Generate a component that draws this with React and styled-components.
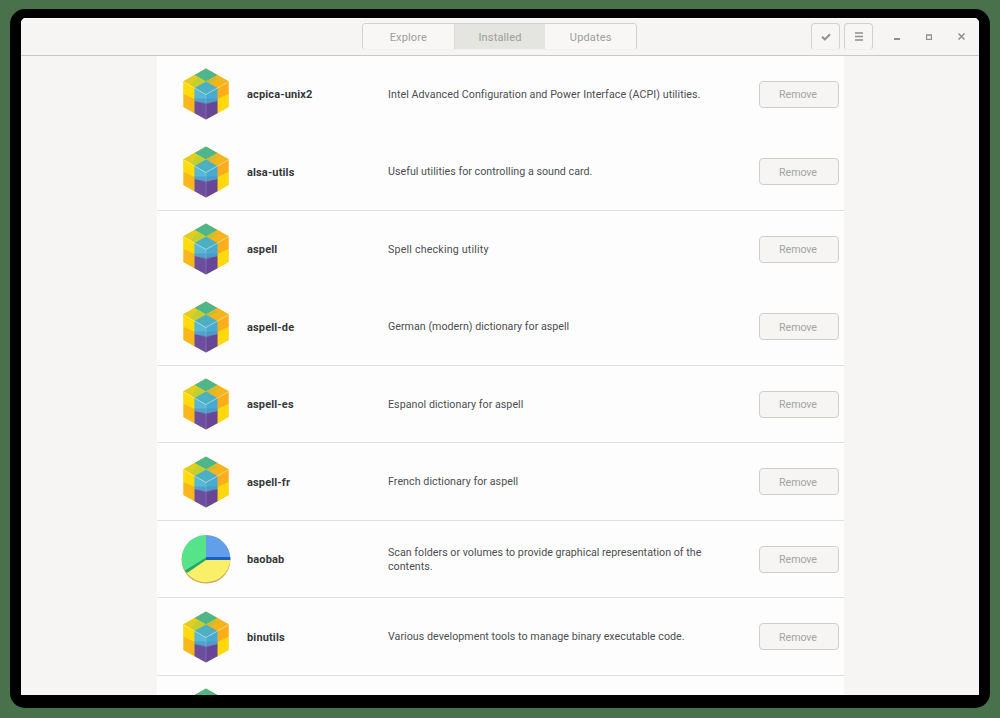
import React from "react";
import styled, { createGlobalStyle } from "styled-components";

const GlobalStyle = createGlobalStyle`
  * { box-sizing: border-box; }
  html, body { margin: 0; height: 100%; overflow: hidden; }
  body { background: #49714c; font-family: Roboto, "Noto Sans", sans-serif; }
`;

const Desktop = styled.div`
  width: 1000px;
  height: 718px;
  padding: 9px 10px 10px;
  background: #49714c;
`;

const Frame = styled.div`
  width: 980px;
  height: 699px;
  padding: 9px 11px 13px;
  background: #000;
  border-radius: 15px;
`;

const Window = styled.div`
  height: 677px;
  display: flex;
  flex-direction: column;
  background: #f6f5f4;
  border-radius: 5px 5px 0 0;
  overflow: hidden;
`;

const HeaderBar = styled.header`
  height: 38px;
  flex: none;
  display: grid;
  grid-template-columns: 341px 275px 1fr;
  align-items: center;
  background: #f6f5f3;
  border-bottom: 1px solid #cbc9c7;
  box-shadow: inset 0 1px #fbfbfa;
`;

const Tabs = styled.nav`
  grid-column: 2;
  height: 27px;
  display: flex;
  border: 1px solid #d3d1ce;
  border-bottom-color: #f3f2f0;
  border-radius: 4px;
  overflow: hidden;
`;

const Tab = styled.button`
  flex: 1;
  padding: 2px 0 0;
  border: 0;
  border-left: ${(p) => (p.$active ? "1px solid #dad9d6" : "0")};
  font: 11px Roboto, sans-serif;
  letter-spacing: 0.15px;
  color: #9c9f9b;
  background: ${(p) => (p.$active ? "#e4e4e0" : "#f8f7f6")};
`;

const Actions = styled.div`
  display: flex;
  justify-content: flex-end;
  align-items: center;
  padding-right: 2px;
`;

const ToolButton = styled.button`
  width: 29px;
  height: 27px;
  margin-right: ${(p) => p.$gap}px;
  padding: 0;
  display: grid;
  place-items: center;
  border: 1px solid #d3d1ce;
  border-bottom-color: #f1f0ed;
  border-radius: 4px;
  background: #f7f6f4;
  color: #8d908c;
`;

const WindowButton = styled.button`
  width: 32px;
  height: 27px;
  padding: 0;
  display: grid;
  place-items: center;
  border: 0;
  background: none;
  color: #8d908c;
`;

const Content = styled.main`
  flex: 1;
  min-height: 0;
  overflow: hidden;
  padding-left: 136px;
`;

const List = styled.ul`
  width: 687px;
  margin: -0.1px 0 0;
  padding: 0;
  list-style: none;
  background: #fdfdfd;
`;

const Row = styled.li`
  height: 77.5px;
  padding: 0 5px 0 24px;
  display: grid;
  grid-template-columns: 66px 141px 371px 80px;
  align-items: center;
  border-bottom: 1px solid ${(p) => (p.$divided ? "#e0dfdd" : "transparent")};
`;

const Name = styled.span`
  padding-top: 1px;
  font-size: 11px;
  font-weight: 700;
  letter-spacing: 0.14px;
  color: #35383a;
`;

const Description = styled.span`
  padding-top: 2px;
  font-size: 10.7px;
  line-height: 14.5px;
  letter-spacing: ${(p) => p.$spacing}px;
  white-space: pre-line;
  color: #4c4f51;
`;

const RemoveButton = styled.button`
  width: 80px;
  height: 27px;
  padding: 1px 2px 0 0;
  border: 1px solid #d2cfcb;
  border-radius: 4px;
  background: #f6f5f3;
  font: 10.7px Roboto, sans-serif;
  letter-spacing: -0.1px;
  color: #a3a5a2;
`;

const Drawing = styled.svg`
  display: block;
`;

const PackageIcon = () => (
  <Drawing width="50" height="54" viewBox="0 0 50 54">
    <path d="M25 1.5 47.5 14.3V40L25 52.6 2.5 40V14.3Z" fill="#f2c516" />
    <path d="M25 1.5 36.5 8 25 14.5 13.5 8Z" fill="#4eb68a" />
    <path d="M13.5 8 25 14.5 13.5 21 2.5 14.3Z" fill="#e3cd1c" />
    <path d="M17 10 25 14.5 13.5 21 9.5 18.6Z" fill="#c3cf31" />
    <path d="M36.5 8 47.5 14.3 36.5 21 25 14.5Z" fill="#f4b41b" />
    <path d="M33 10 36.5 12 29 16.5 25 14.5Z" fill="#c9bd35" />
    <path d="M2.5 14.3 13.5 21V32L2.5 27Z" fill="#ffdb0a" />
    <path d="M2.5 27 13.5 32V46.2L2.5 40Z" fill="#fab71c" />
    <path d="M36.5 21 47.5 14.3V27L36.5 32Z" fill="#fbad1b" />
    <path d="M36.5 32 47.5 27V40L36.5 46.2Z" fill="#ffd90b" />
    <path d="M25 14.5 36.5 21 25 27.5 13.5 21Z" fill="#4bb0c6" />
    <path d="M13.5 21 25 27.5V36L13.5 34Z" fill="#55b9d7" />
    <path d="M36.5 21 25 27.5V36L36.5 34Z" fill="#48aad3" />
    <path d="M13.5 34 25 36V52.6L13.5 46.2Z" fill="#6d4d9e" />
    <path d="M36.5 34 25 36V52.6L36.5 46.2Z" fill="#674597" />
    <path d="M13.5 31.5H36.5V34L25 37.5 13.5 34Z" fill="#4f8fc6" opacity=".6" />
    <path d="M3 15 13.5 21 25 27.5 36.5 21 47 15" fill="none" stroke="#fff" strokeWidth="1" opacity=".4" />
    <path d="M25 27.5V52" fill="none" stroke="#d9f2ef" strokeWidth=".8" opacity=".25" />
  </Drawing>
);

const DiskUsageIcon = () => (
  <Drawing width="50" height="52" viewBox="0 0 50 52">
    <ellipse cx="25" cy="26.9" rx="24.4" ry="23.7" fill="#caa94f" />
    <path d="M25 25.5V2A24.3 23.6 0 0 0 5 39Z" fill="#57e389" />
    <path d="M25 25.5V2A24.3 23.6 0 0 1 49.3 25.5Z" fill="#629fea" />
    <path d="M25 25.5H49.3A24.3 23.6 0 0 1 5 39Z" fill="#f9ef68" />
    <path d="M25 24H49.3V27H25Z" fill="#1c61bd" />
    <path d="M25 24.5 4 37.5 6 40 25 27Z" fill="#26a568" />
  </Drawing>
);

const CheckIcon = () => (
  <Drawing width="10" height="8" viewBox="0 0 10 8">
    <path d="M1 3.8 3.8 6.4 9 1.2" fill="none" stroke="currentColor" strokeWidth="2" />
  </Drawing>
);

const MenuIcon = () => (
  <Drawing width="8" height="9" viewBox="0 0 8 9">
    <path d="M0 1H8M0 4.5H8M0 8H8" stroke="currentColor" strokeWidth="1.6" />
  </Drawing>
);

const MinimizeIcon = () => (
  <Drawing width="6" height="6" viewBox="0 0 6 6">
    <path d="M0 5H6" stroke="currentColor" strokeWidth="2" />
  </Drawing>
);

const MaximizeIcon = () => (
  <Drawing width="6" height="6" viewBox="0 0 6 6">
    <path d="M.5 1V5.5H5.5V1M0 1H6" fill="none" stroke="currentColor" strokeWidth="1.3" />
  </Drawing>
);

const CloseIcon = () => (
  <Drawing width="7" height="7" viewBox="0 0 7 7">
    <path d="M.5.5 6.5 6.5M6.5.5.5 6.5" stroke="currentColor" strokeWidth="1.5" />
  </Drawing>
);

const packages = [
  { name: "acpica-unix2", text: "Intel Advanced Configuration and Power Interface (ACPI) utilities.", spacing: 0.05 },
  { name: "alsa-utils", text: "Useful utilities for controlling a sound card.", divided: true, spacing: 0.02 },
  { name: "aspell", text: "Spell checking utility", spacing: 0.17 },
  { name: "aspell-de", text: "German (modern) dictionary for aspell", divided: true, spacing: 0.01 },
  { name: "aspell-es", text: "Espanol dictionary for aspell", divided: true, spacing: 0.03 },
  { name: "aspell-fr", text: "French dictionary for aspell", divided: true, spacing: 0.05 },
  { name: "baobab", text: "Scan folders or volumes to provide graphical representation of the\ncontents.", divided: true, icon: "disk", spacing: 0.01 },
  { name: "binutils", text: "Various development tools to manage binary executable code.", divided: true, spacing: 0.03 },
];

export default function App() {
  return (
    <Desktop>
      <GlobalStyle />
      <Frame>
        <Window>
          <HeaderBar>
            <Tabs>
              <Tab>Explore</Tab>
              <Tab $active>Installed</Tab>
              <Tab>Updates</Tab>
            </Tabs>
            <Actions>
              <ToolButton $gap={4} aria-label="Select"><CheckIcon /></ToolButton>
              <ToolButton $gap={8} aria-label="Menu"><MenuIcon /></ToolButton>
              <WindowButton aria-label="Minimize"><MinimizeIcon /></WindowButton>
              <WindowButton aria-label="Maximize"><MaximizeIcon /></WindowButton>
              <WindowButton aria-label="Close"><CloseIcon /></WindowButton>
            </Actions>
          </HeaderBar>
          <Content>
            <List>
              {packages.map((p) => (
                <Row key={p.name} $divided={p.divided}>
                  {p.icon === "disk" ? <DiskUsageIcon /> : <PackageIcon />}
                  <Name>{p.name}</Name>
                  <Description $spacing={p.spacing}>{p.text}</Description>
                  <RemoveButton>Remove</RemoveButton>
                </Row>
              ))}
              <Row><PackageIcon /></Row>
            </List>
          </Content>
        </Window>
      </Frame>
    </Desktop>
  );
}
